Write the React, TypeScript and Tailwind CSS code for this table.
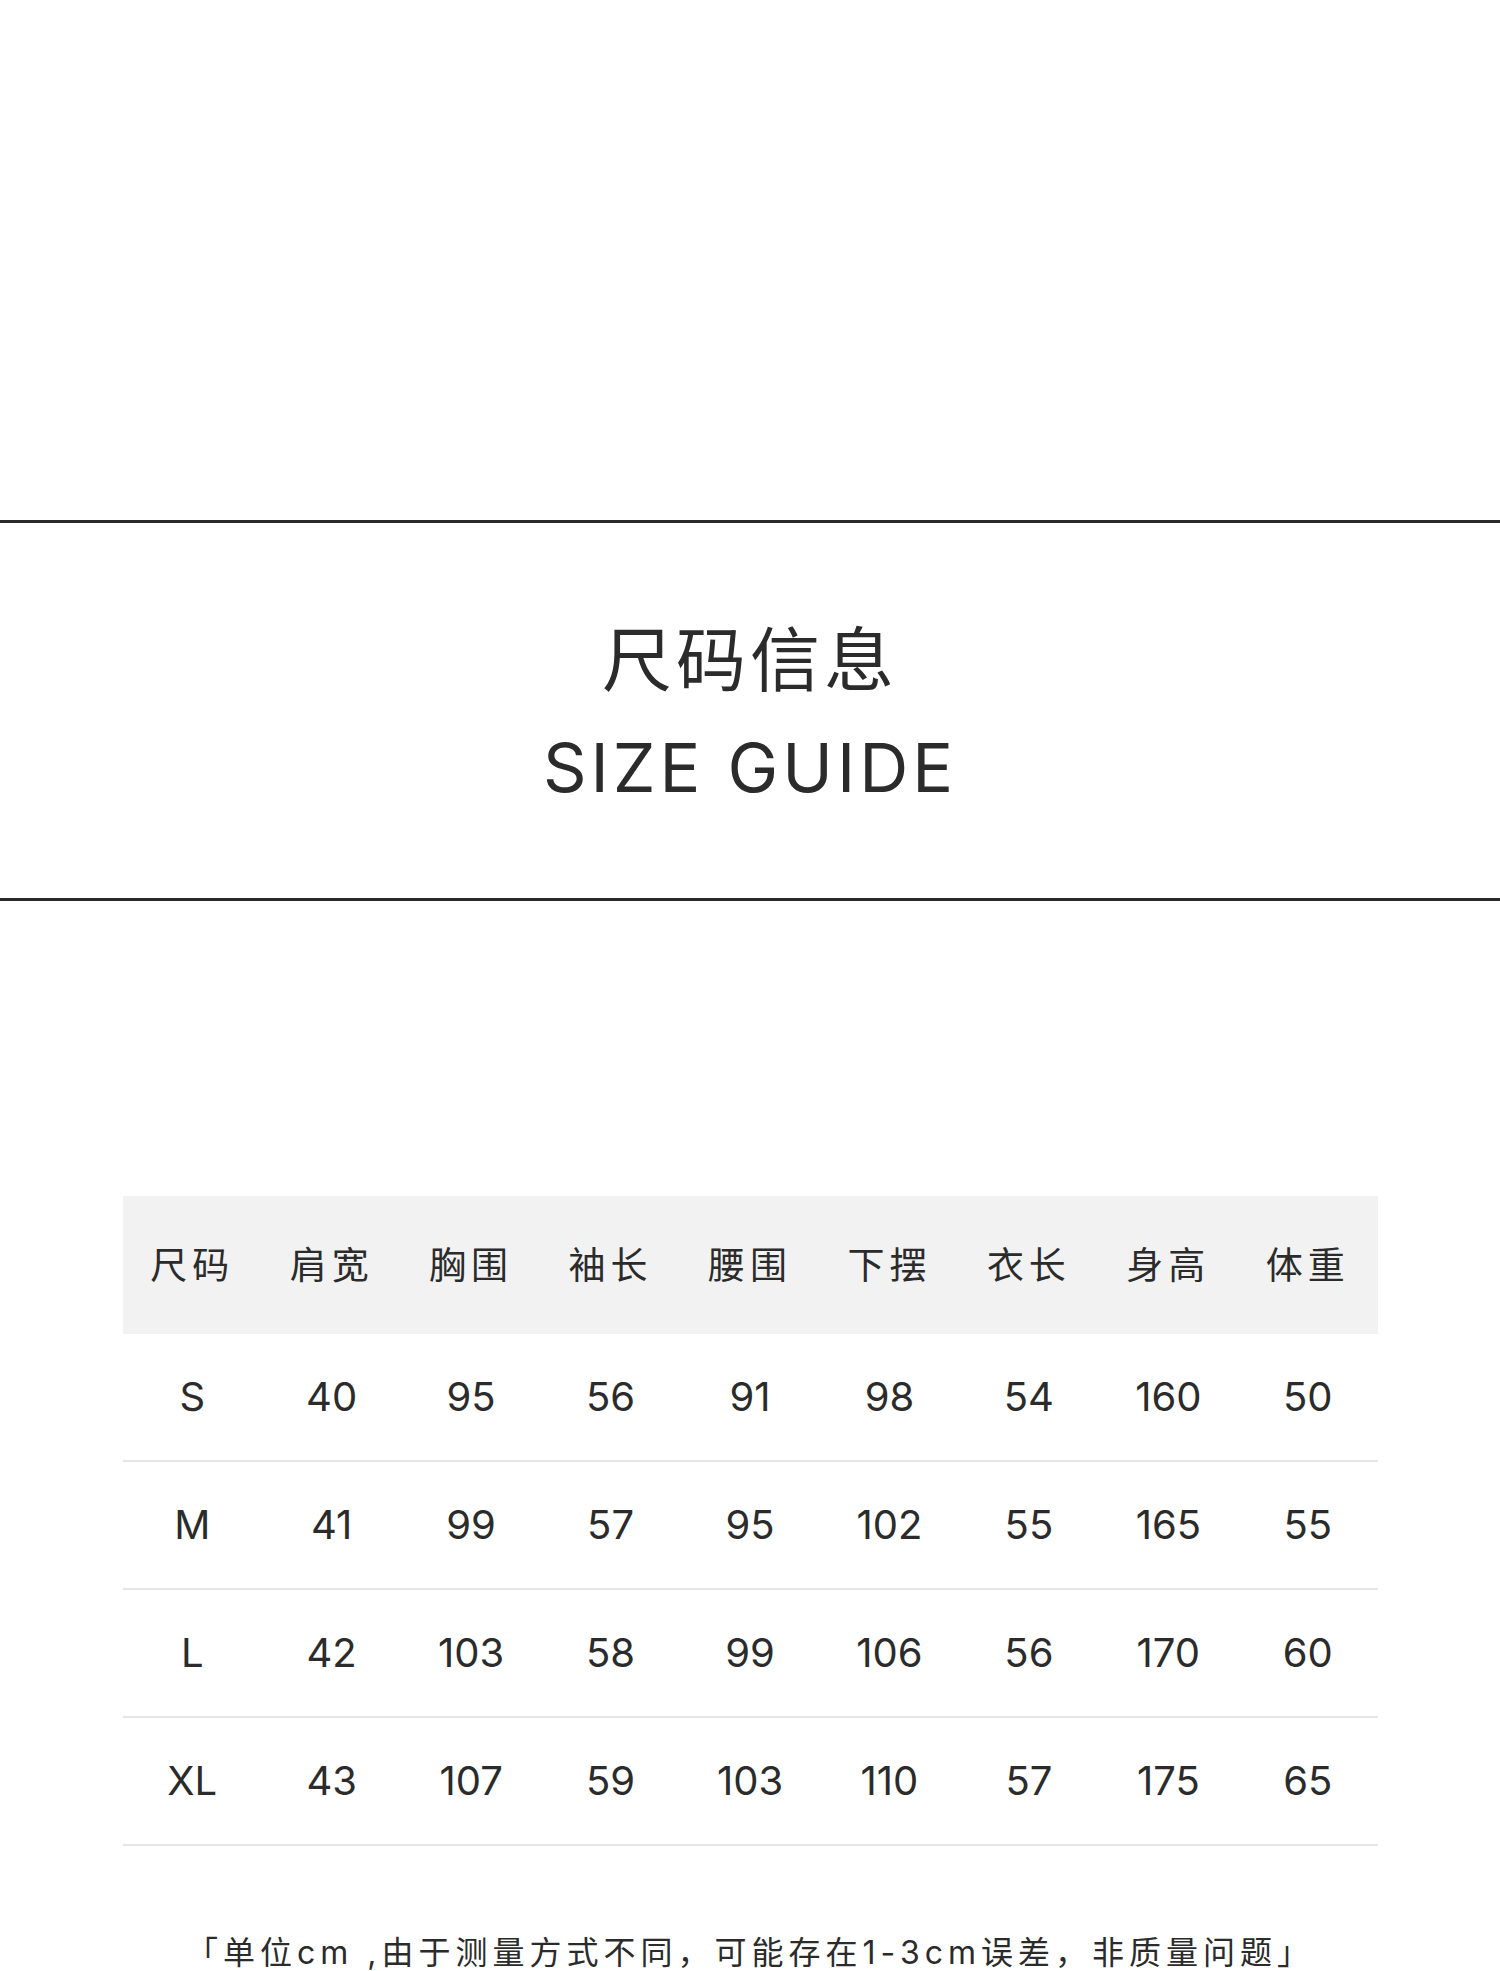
const headers = ['尺码', '肩宽', '胸围', '袖长', '腰围', '下摆', '衣长', '身高', '体重'];

const rows = [
  ['S', '40', '95', '56', '91', '98', '54', '160', '50'],
  ['M', '41', '99', '57', '95', '102', '55', '165', '55'],
  ['L', '42', '103', '58', '99', '106', '56', '170', '60'],
  ['XL', '43', '107', '59', '103', '110', '57', '175', '65'],
];

export default function App() {
  return (
    <div className="w-[1500px] min-h-[1971px] bg-white text-[#2b2b2b] font-['Inter','Noto_Sans_CJK_SC',sans-serif]">
      <div className="h-[520px]" />

      <div className="border-y-[3px] border-[#2a2a2a] h-[381px] flex flex-col items-center justify-center">
        <h1 className="text-[70px] leading-none tracking-[4px] font-normal font-['Noto_Sans_CJK_SC',sans-serif]">尺码信息</h1>
        <h2 className="mt-[42px] text-[68px] leading-none tracking-[4px] font-normal">SIZE GUIDE</h2>
      </div>

      <div className="w-[1255px] mx-auto mt-[295px]">
        <div className="grid grid-cols-9 h-[138px] items-center bg-[#f2f2f2] pb-[3px]">
          {headers.map(h => (
            <div key={h} className="text-center text-[37px] tracking-[5px] font-['Noto_Sans_CJK_SC',sans-serif]">
              {h}
            </div>
          ))}
        </div>

        {rows.map(row => (
          <div key={row[0]} className="grid grid-cols-9 h-[128px] items-center border-b-2 border-[#e6e6e6]">
            {row.map((v, i) => (
              <div key={i} className="text-center text-[40px] leading-none">
                {v}
              </div>
            ))}
          </div>
        ))}
      </div>

      <p className="mt-[91px] text-center text-[32px] leading-none tracking-[5px]">
        「单位cm ,由于测量方式不同，可能存在1-3cm误差，非质量问题」
      </p>
    </div>
  );
}
